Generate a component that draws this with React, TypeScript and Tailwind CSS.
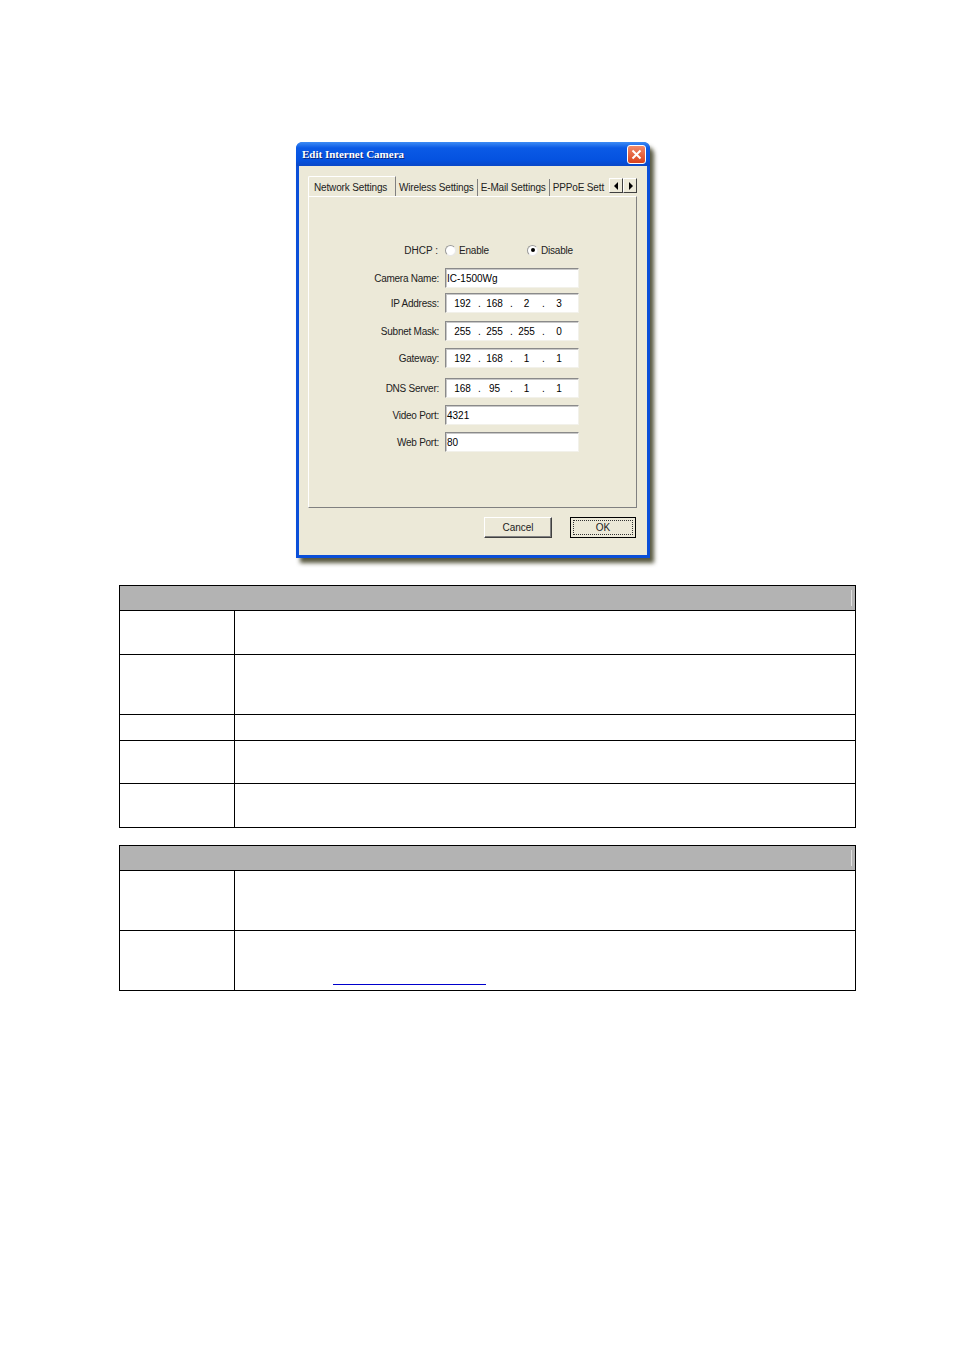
import React from "react";

const fieldFont = "font-['Liberation_Sans','DejaVu_Sans',sans-serif]";

function Field({ children }: { children: React.ReactNode }) {
  return (
    <div
      className={`w-[134px] h-[20px] bg-white border border-t-[#8a8a8a] border-l-[#8a8a8a] border-b-[#f2f1ea] border-r-[#f2f1ea] shadow-[inset_1px_1px_0_#c8c8c8] flex items-center text-[10px] text-black ${fieldFont}`}
    >
      {children}
    </div>
  );
}

function IpField({ parts }: { parts: string[] }) {
  return (
    <Field>
      <div className="flex w-full pl-[1px]">
        {parts.map((p, i) => (
          <div key={i} className="flex w-[32px] items-center">
            <span className="flex-1 text-center">{p}</span>
            {i < 3 && <span className="w-[2px] -mr-[1px] text-center">.</span>}
          </div>
        ))}
      </div>
    </Field>
  );
}

function Row({
  label,
  top,
  children,
}: {
  label: string;
  top: string;
  children: React.ReactNode;
}) {
  return (
    <div className={`flex items-center ${top}`}>
      <div className="w-[130px] text-right text-[10px] tracking-[-0.25px] text-[#222]">
        {label}
      </div>
      <div className="ml-[6px]">{children}</div>
    </div>
  );
}

function Radio({ checked }: { checked?: boolean }) {
  return (
    <span className="w-[11px] h-[11px] rounded-full bg-white border border-t-[#9a9a9a] border-l-[#9a9a9a] border-b-[#e8e8e8] border-r-[#e8e8e8] flex items-center justify-center">
      {checked && <span className="w-[4px] h-[4px] rounded-full bg-black" />}
    </span>
  );
}

function ArrowBtn({ dir }: { dir: "left" | "right" }) {
  return (
    <div className="w-[14px] h-[15px] bg-[#ece9d8] border border-t-white border-l-white border-b-[#404040] border-r-[#404040] flex items-center justify-center">
      <svg width="5" height="8" viewBox="0 0 5 8">
        {dir === "left" ? (
          <path d="M4 0 L0 4 L4 8 Z" fill="#000" />
        ) : (
          <path d="M1 0 L5 4 L1 8 Z" fill="#000" />
        )}
      </svg>
    </div>
  );
}

function Tab({ label }: { label: string }) {
  return (
    <div className="h-[17px] shrink-0 px-[3px] border-r border-r-[#808080] flex items-center text-[10px] tracking-[-0.15px] text-[#222] whitespace-nowrap">
      {label}
    </div>
  );
}

function Dialog() {
  return (
    <div className="w-[354px] h-[416px] rounded-t-[7px] bg-[#0a4fd8] px-[3px] pb-[3px] flex flex-col shadow-[4px_5px_4px_rgba(45,45,15,0.8)]">
      <div className="h-[24px] rounded-t-[6px] -mx-[3px] px-[6px] bg-[linear-gradient(to_bottom,#3d8cf5_0%,#0b5ae6_25%,#0552e0_75%,#0a48c8_100%)] flex items-center justify-between">
        <span className="text-white font-bold text-[11px] font-['Liberation_Serif','DejaVu_Serif',serif] [text-shadow:1px_1px_0_#0a2a80]">
          Edit Internet Camera
        </span>
        <div className="w-[19px] h-[19px] mr-[-2px] rounded-[3px] border border-white bg-[linear-gradient(to_bottom,#f08a6a,#d9421c)] flex items-center justify-center">
          <svg width="11" height="11" viewBox="0 0 11 11">
            <path d="M1.5 1.5 L9.5 9.5 M9.5 1.5 L1.5 9.5" stroke="#fff" strokeWidth="2" />
          </svg>
        </div>
      </div>
      <div className="flex-1 bg-[#ece9d8] pl-[9px] pr-[10px] pt-[10px] flex flex-col">
        <div className="h-[20px] flex items-end">
          <div className="flex-1 flex items-end overflow-hidden h-full">
            <div className="relative z-10 -mb-px h-[21px] w-[88px] shrink-0 bg-[#ece9d8] border-t border-l border-t-white border-l-white border-r border-r-[#808080] rounded-tl-[2px] flex items-start pt-[3px] pl-[5px] text-[10px] tracking-[-0.15px] text-[#222] whitespace-nowrap">
              Network Settings
            </div>
            <Tab label="Wireless Settings" />
            <Tab label="E-Mail Settings" />
            <div className="h-[17px] flex-1 pl-[3px] flex items-center text-[10px] tracking-[-0.15px] text-[#222] whitespace-nowrap">
              PPPoE Sett
            </div>
          </div>
          <div className="flex self-start mt-[2px]">
            <ArrowBtn dir="left" />
            <ArrowBtn dir="right" />
          </div>
        </div>
        <div className="h-[312px] border-t border-l border-t-white border-l-white border-r border-b border-r-[#808080] border-b-[#808080] flex flex-col pt-[46px]">
          <div className="flex items-center h-[14px]">
            <div className="w-[130px] text-right text-[10px] text-[#222] pr-[1px]">
              DHCP :
            </div>
            <div className="ml-[6px] flex items-center">
              <Radio />
              <span className="ml-[3px] text-[10px] tracking-[-0.2px] text-[#222] w-[68px]">Enable</span>
              <Radio checked />
              <span className="ml-[3px] text-[10px] tracking-[-0.2px] text-[#222]">Disable</span>
            </div>
          </div>
          <Row label="Camera Name:" top="mt-[11px]">
            <Field>
              <span className="pl-[1px]">IC-1500Wg</span>
            </Field>
          </Row>
          <Row label="IP Address:" top="mt-[5px]">
            <IpField parts={["192", "168", "2", "3"]} />
          </Row>
          <Row label="Subnet Mask:" top="mt-[8px]">
            <IpField parts={["255", "255", "255", "0"]} />
          </Row>
          <Row label="Gateway:" top="mt-[7px]">
            <IpField parts={["192", "168", "1", "1"]} />
          </Row>
          <Row label="DNS Server:" top="mt-[10px]">
            <IpField parts={["168", "95", "1", "1"]} />
          </Row>
          <Row label="Video Port:" top="mt-[7px]">
            <Field>
              <span className="pl-[1px]">4321</span>
            </Field>
          </Row>
          <Row label="Web Port:" top="mt-[7px]">
            <Field>
              <span className="pl-[1px]">80</span>
            </Field>
          </Row>
        </div>
        <div className="mt-[9px] flex justify-end pr-[1px] gap-[18px]">
          <div className="w-[68px] h-[21px] bg-[#ece9d8] border border-t-white border-l-white border-b-[#404040] border-r-[#404040] shadow-[inset_-1px_-1px_0_#808080] flex items-center justify-center text-[10px] text-[#222]">
            Cancel
          </div>
          <div className="w-[66px] h-[21px] bg-[#ece9d8] border border-black p-[2px]">
            <div className="h-full border border-dotted border-[#333] flex items-center justify-center text-[10px] text-[#222]">
              OK
            </div>
          </div>
        </div>
      </div>
    </div>
  );
}

function Table({ rows }: { rows: { h: string; link?: boolean }[] }) {
  return (
    <div className="w-[737px] border border-black">
      <div className="h-[25px] bg-[#b3b3b3] border-b border-black flex items-center justify-end pr-[3px]">
        <div className="w-px h-[16px] bg-[#e0e0e0]" />
      </div>
      {rows.map((r, i) => (
        <div
          key={i}
          className={`flex ${r.h} ${i < rows.length - 1 ? "border-b border-black" : ""}`}
        >
          <div className="w-[115px] border-r border-black" />
          <div className="flex-1 flex flex-col justify-end pb-[5px]">
            {r.link && <div className="ml-[98px] w-[153px] h-px bg-[#0000cc]" />}
          </div>
        </div>
      ))}
    </div>
  );
}

export default function App() {
  return (
    <div className="w-[954px] h-[1350px] bg-white font-['Liberation_Sans',Arial,sans-serif] pt-[142px]">
      <div className="ml-[296px]">
        <Dialog />
      </div>
      <div className="ml-[119px] mt-[27px]">
        <Table
          rows={[
            { h: "h-[44px]" },
            { h: "h-[60px]" },
            { h: "h-[26px]" },
            { h: "h-[43px]" },
            { h: "h-[43px]" },
          ]}
        />
      </div>
      <div className="ml-[119px] mt-[17px]">
        <Table rows={[{ h: "h-[60px]" }, { h: "h-[59px]", link: true }]} />
      </div>
    </div>
  );
}
